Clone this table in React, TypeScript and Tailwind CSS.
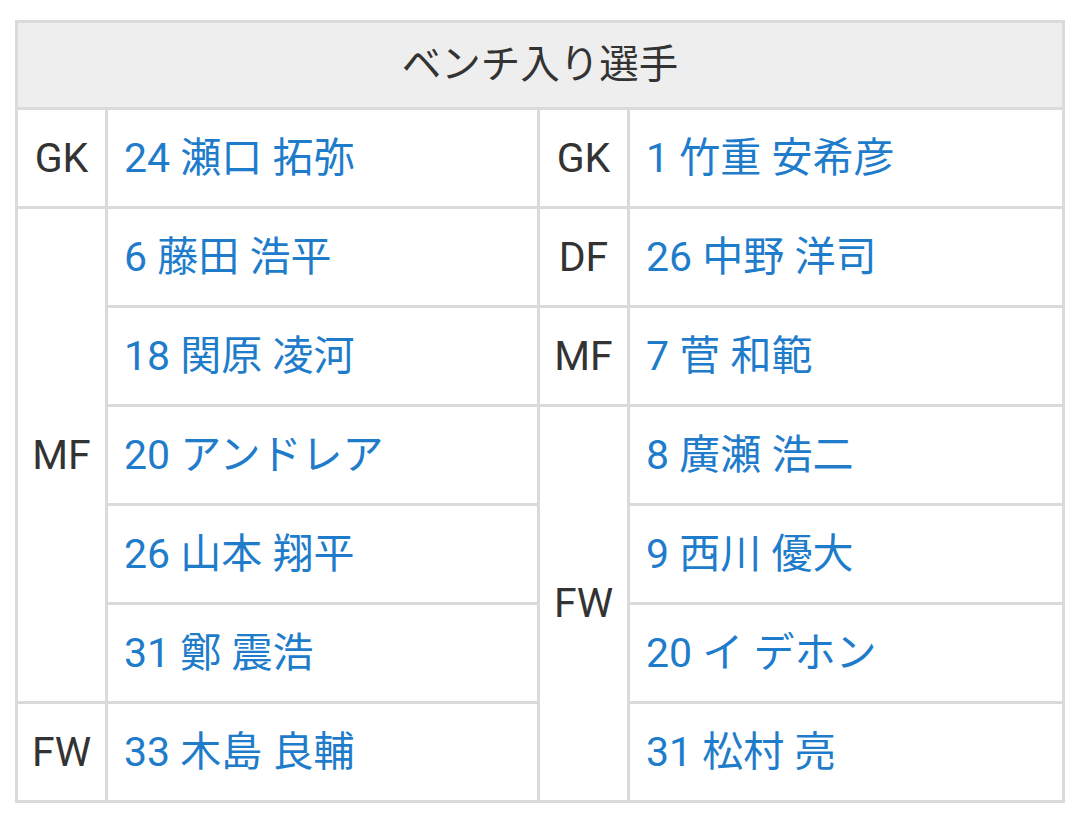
import React from 'react';

const font = { fontFamily: 'Roboto, "Noto Sans CJK JP", sans-serif' };

const cell = 'border-[3px] border-[#dadada] align-middle';
const pos = `${cell} text-center text-[#333333]`;
const name = `${cell} pl-4 text-[#1e7ccb]`;

export default function App() {
  return (
    <div className="min-h-screen bg-white pt-5 pl-[15px]" style={font}>
      <table className="border-collapse w-[1050px] text-[41px] leading-none table-fixed">
        <colgroup>
          <col className="w-[90px]" />
          <col className="w-[432px]" />
          <col className="w-[90px]" />
          <col />
        </colgroup>
        <thead>
          <tr>
            <th colSpan={4} className={`${cell} h-[87px] bg-[#eeeeee] font-normal text-[#333333] text-[39.5px]`}>
              ベンチ入り選手
            </th>
          </tr>
        </thead>
        <tbody>
          <tr className="h-[99px]">
            <td className={pos}>GK</td>
            <td className={name}>24 瀬口 拓弥</td>
            <td className={pos}>GK</td>
            <td className={name}>1 竹重 安希彦</td>
          </tr>
          <tr className="h-[99px]">
            <td className={pos} rowSpan={5}>MF</td>
            <td className={name}>6 藤田 浩平</td>
            <td className={pos}>DF</td>
            <td className={name}>26 中野 洋司</td>
          </tr>
          <tr className="h-[99px]">
            <td className={name}>18 関原 凌河</td>
            <td className={pos}>MF</td>
            <td className={name}>7 菅 和範</td>
          </tr>
          <tr className="h-[99px]">
            <td className={name}>20 アンドレア</td>
            <td className={pos} rowSpan={4}>FW</td>
            <td className={name}>8 廣瀬 浩二</td>
          </tr>
          <tr className="h-[99px]">
            <td className={name}>26 山本 翔平</td>
            <td className={name}>9 西川 優大</td>
          </tr>
          <tr className="h-[99px]">
            <td className={name}>31 鄭 震浩</td>
            <td className={name}>20 イ デホン</td>
          </tr>
          <tr className="h-[99px]">
            <td className={pos}>FW</td>
            <td className={name}>33 木島 良輔</td>
            <td className={name}>31 松村 亮</td>
          </tr>
        </tbody>
      </table>
    </div>
  );
}
